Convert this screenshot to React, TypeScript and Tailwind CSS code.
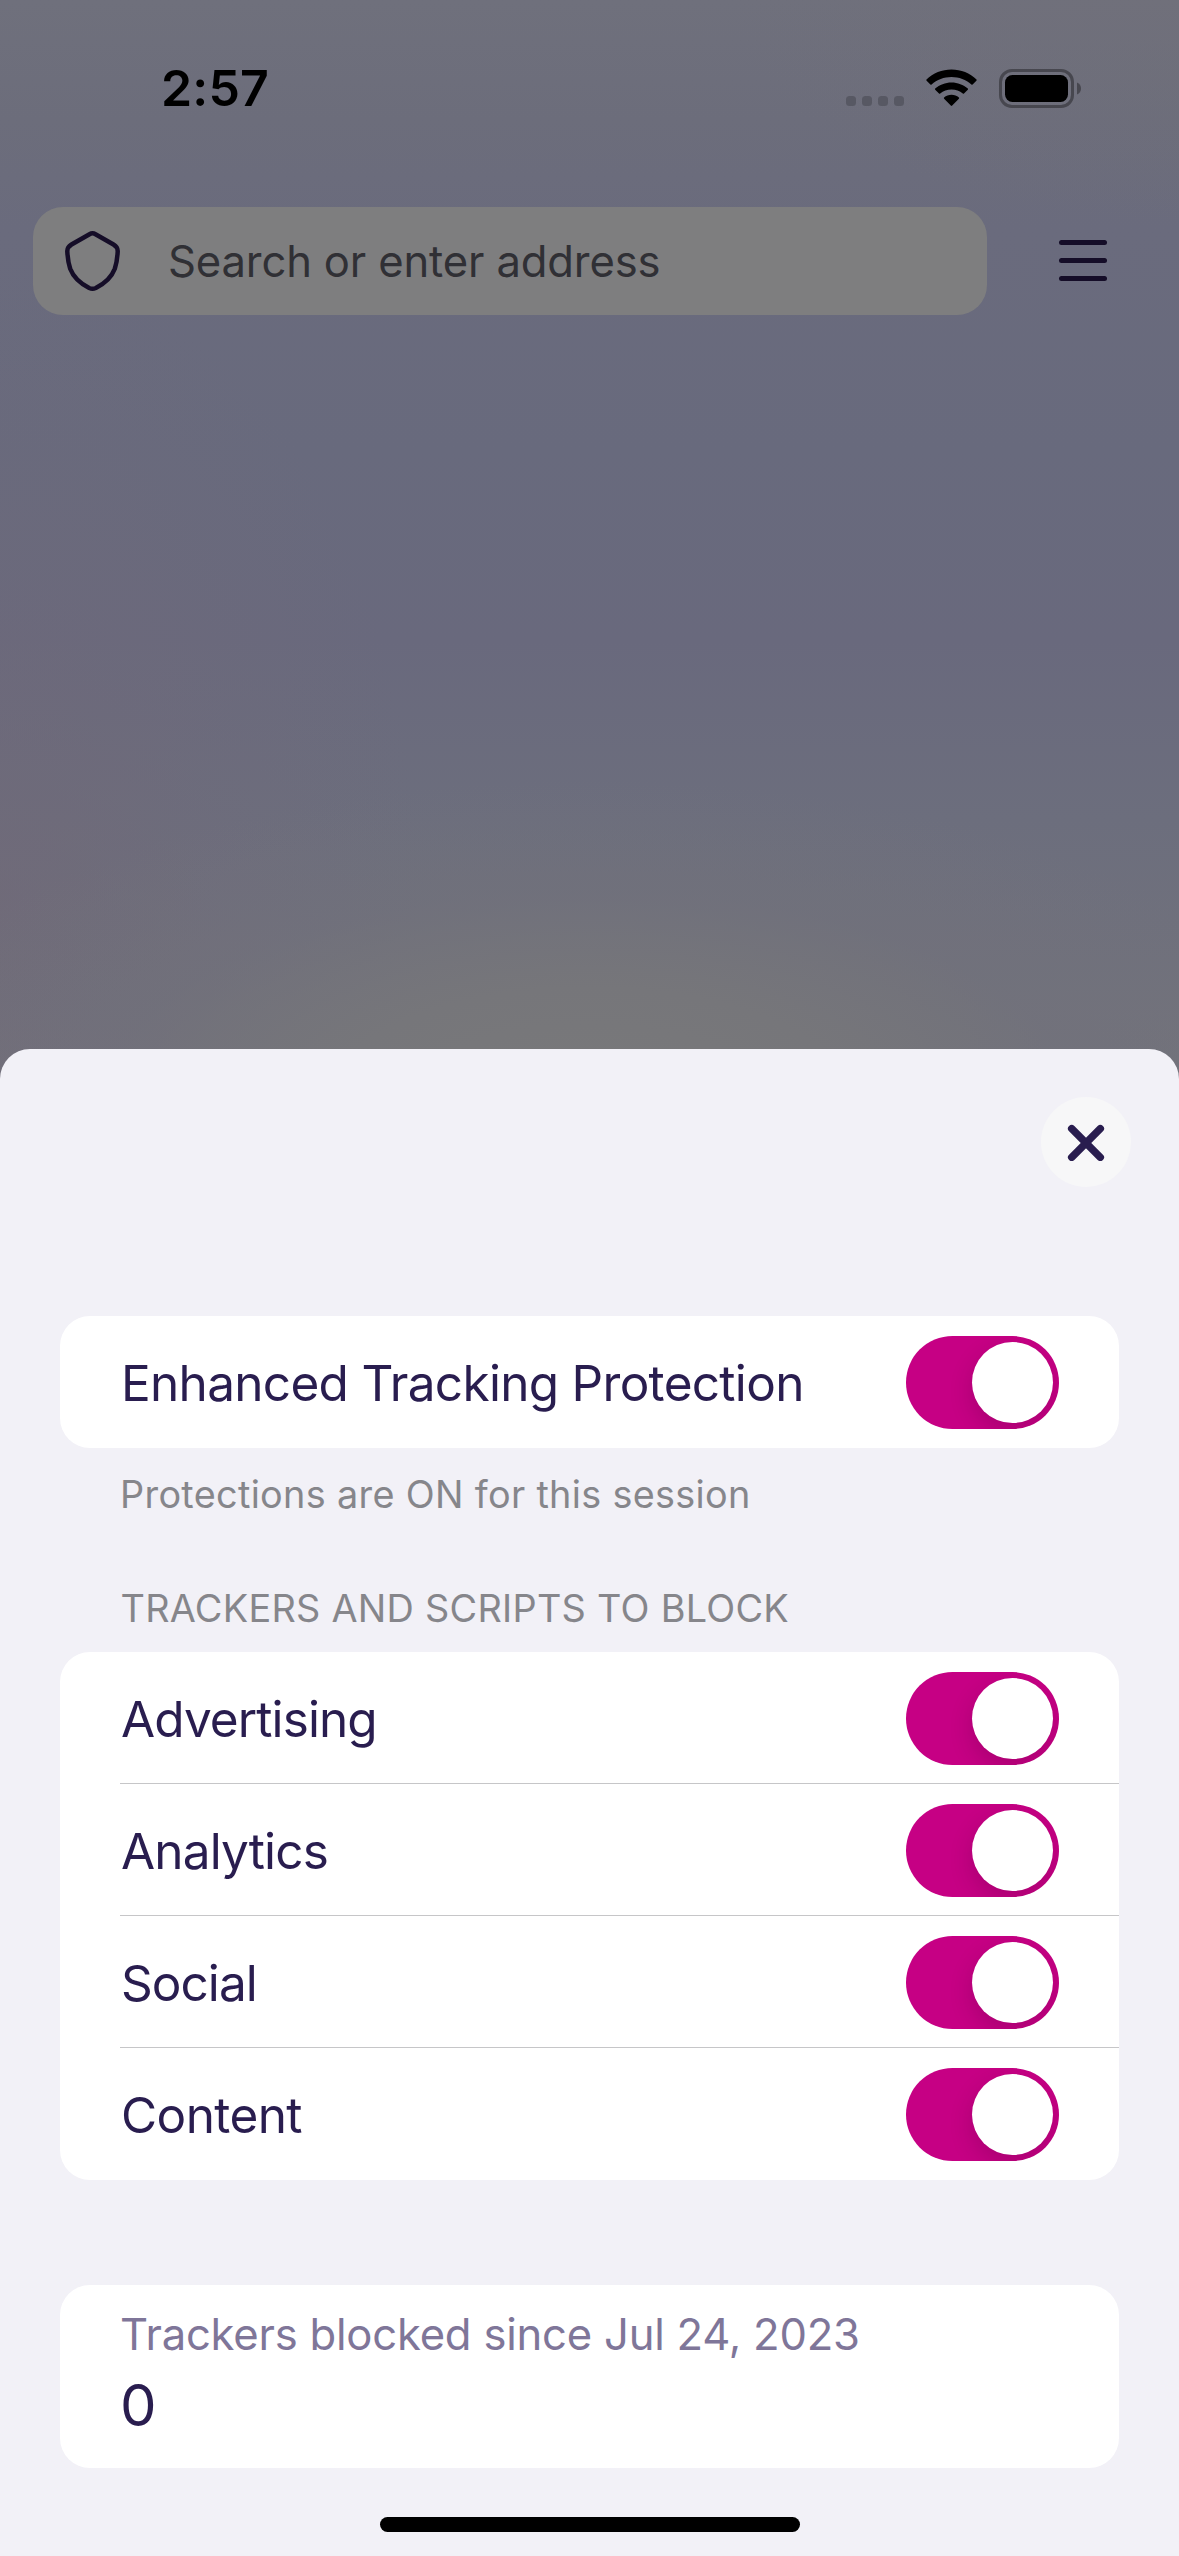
const categories = [
  { label: "Advertising", tracking: "tracking-[-0.9px]" },
  { label: "Analytics", tracking: "tracking-[-0.85px]" },
  { label: "Social", tracking: "tracking-[-0.95px]" },
  { label: "Content", tracking: "tracking-[-0.6px]" },
];

function StatusBar() {
  return (
    <div className="flex h-[176px] items-center justify-between pr-[98px] pl-[161px]">
      <span className="text-[50px] leading-[60px] font-semibold tracking-[0.15px] text-black">2:57</span>
      <div className="flex items-center">
        <div className="mt-[26px] mr-[22px] flex gap-[6px]">
          {[0, 1, 2, 3].map((dot) => (
            <span key={dot} className="size-[10px] rounded-[3.5px] bg-[#575863]" />
          ))}
        </div>
        <svg className="mr-[22px] h-[38px] w-[51px]" viewBox="0 0 51 38">
          <path d="M25.5 0.6C35 0.6 44 4.2 50.5 10.6Q51 11.2 50.4 11.8L46.6 15.6Q46 16.1 45.4 15.6C40 10.7 33 8 25.5 8S11 10.7 5.6 15.6Q5 16.1 4.4 15.6L0.6 11.8Q0 11.2 0.5 10.6C7 4.2 16 0.6 25.5 0.6Z" />
          <path d="M25.5 13.4C31.7 13.4 37.4 15.7 41.8 19.6Q42.4 20.2 41.8 20.8L38 24.6Q37.4 25.1 36.8 24.6C33.7 22 29.8 20.5 25.5 20.5S17.3 22 14.2 24.6Q13.6 25.1 13 24.6L9.2 20.8Q8.6 20.2 9.2 19.6C13.6 15.7 19.3 13.4 25.5 13.4Z" />
          <path d="M25.5 25.8C28.3 25.8 30.9 26.8 32.9 28.5Q33.5 29.1 32.9 29.7L26.2 36.6Q25.5 37.3 24.8 36.6L18.1 29.7Q17.5 29.1 18.1 28.5C20.1 26.8 22.7 25.8 25.5 25.8Z" />
        </svg>
        <svg className="h-[39px] w-[82px]" viewBox="0 0 82 39">
          <rect x="1.5" y="1.5" width="72" height="36" rx="11.5" fill="none" stroke="#47474f" strokeWidth="3" />
          <rect x="6" y="6" width="63" height="27" rx="7.5" />
          <path d="M78 13.5C80.5 14.5 82 16.8 82 19.5S80.5 24.5 78 25.5Z" fill="#47474f" />
        </svg>
      </div>
    </div>
  );
}

function AddressBar() {
  return (
    <div className="mt-[31px] flex items-center pl-[33px]">
      <div className="flex h-[108px] w-[954px] items-center rounded-[30px] bg-[#7e7e7f] pl-[32px]">
        <svg className="h-[60px] w-[55px]" viewBox="0 0 55 60" fill="none" stroke="#150d28" strokeWidth="4.5" strokeLinejoin="round">
          <path d="M24.5 3.2Q27.5 1.5 30.5 3.2L48.5 13.5Q52.9 16.1 52.7 20.5C52.3 28 51.2 33.6 49.8 37.8C46.8 45.7 41.2 51.8 30.8 57Q27.5 58.4 24.2 57C13.8 51.8 8.2 45.7 5.2 37.8C3.8 33.6 2.7 28 2.3 20.5Q2.1 16.1 6.5 13.5Z" />
        </svg>
        <span className="mt-[2px] ml-[48px] text-[43.6px] leading-[54px] tracking-[-0.15px] whitespace-nowrap text-[#303035]">
          Search or enter address
        </span>
      </div>
      <div className="mb-[1px] ml-[72px] flex w-[48px] flex-col gap-[13px]">
        <span className="h-[5px] rounded-full bg-[#150d28]" />
        <span className="h-[5px] rounded-full bg-[#150d28]" />
        <span className="h-[5px] rounded-full bg-[#150d28]" />
      </div>
    </div>
  );
}

function Toggle() {
  return (
    <span
      role="switch"
      aria-checked="true"
      className="flex h-[93px] w-[153px] items-center justify-end overflow-hidden rounded-full bg-[#c60084] pr-[6px]"
    >
      <span className="size-[81px] rounded-full bg-white shadow-[0_9px_24px_rgba(0,0,0,0.15)]" />
    </span>
  );
}

function SettingRow({ label, tracking, divided }: { label: string; tracking: string; divided?: boolean }) {
  return (
    <div
      className={
        divided
          ? "ml-[60px] flex h-[132px] items-start justify-between border-b border-[#c6c6c8] pr-[60px]"
          : "ml-[60px] flex h-[132px] items-start justify-between pr-[60px]"
      }
    >
      <span className={`pt-[37px] pl-px text-[49.5px] leading-[60px] whitespace-nowrap text-[#291d4f] ${tracking}`}>{label}</span>
      <span className="pt-[20px]">
        <Toggle />
      </span>
    </div>
  );
}

export default function App() {
  return (
    <div className="flex h-[2556px] w-[1179px] flex-col overflow-hidden bg-[#6b6b7c] bg-[radial-gradient(ellipse_740px_320px_at_50%_1100px,#79797a_0%,#76767a_35%,rgba(113,113,123,0.6)_65%,transparent_100%),radial-gradient(ellipse_420px_640px_at_0px_900px,rgba(112,104,119,0.65)_0%,rgba(111,105,121,0.35)_50%,transparent_100%),radial-gradient(ellipse_450px_220px_at_1179px_0px,rgba(113,112,121,0.5)_0%,transparent_100%),linear-gradient(180deg,#6f707c_0px,#6c6d7b_120px,#6a6b7d_230px,#686a7d_450px,#69697d_640px,#6c6e7d_820px,#73737b_1060px)] font-[Inter,sans-serif]">
      <header className="h-[1049px] shrink-0">
        <StatusBar />
        <AddressBar />
      </header>

      <main className="flex grow flex-col rounded-t-[30px] bg-[#f2f1f7] px-[60px]">
        <div className="-mr-[12px] flex justify-end pt-[48px]">
          <button className="flex size-[90px] items-center justify-center rounded-full bg-[#f7f7f8]" aria-label="Close">
            <svg className="size-[38px]" viewBox="0 0 38 38" fill="none" stroke="#291d4f" strokeWidth="7.5" strokeLinecap="round">
              <path d="M4.7 5.7L33.3 34.3M33.3 5.7L4.7 34.3" />
            </svg>
          </button>
        </div>

        <section className="mt-[129px] rounded-[30px] bg-white">
          <SettingRow label="Enhanced Tracking Protection" tracking="tracking-[-0.7px]" />
        </section>
        <p className="mt-[23px] ml-[60px] text-[37.8px] leading-[46px] tracking-[0.32px] text-[#86868b]">
          Protections are ON for this session
        </p>

        <h2 className="mt-[68px] ml-[60.5px] text-[37.8px] leading-[46px] tracking-[0.28px] text-[#86868b]">
          TRACKERS AND SCRIPTS TO BLOCK
        </h2>
        <section className="mt-[21px] rounded-[30px] bg-white">
          {categories.map((category, index) => (
            <SettingRow key={category.label} {...category} divided={index < categories.length - 1} />
          ))}
        </section>

        <section className="mt-[105px] h-[183px] rounded-[30px] bg-white pt-[23px] pl-[60px]">
          <p className="text-[43.6px] leading-[54px] tracking-[-0.22px] text-[#7f7699]">Trackers blocked since Jul 24, 2023</p>
          <p className="mt-[8px] text-[58px] leading-[70px] text-[#291d4f]">0</p>
        </section>

        <div className="mt-[49px] h-[15px] w-[420px] self-center rounded-full bg-black" />
      </main>
    </div>
  );
}
